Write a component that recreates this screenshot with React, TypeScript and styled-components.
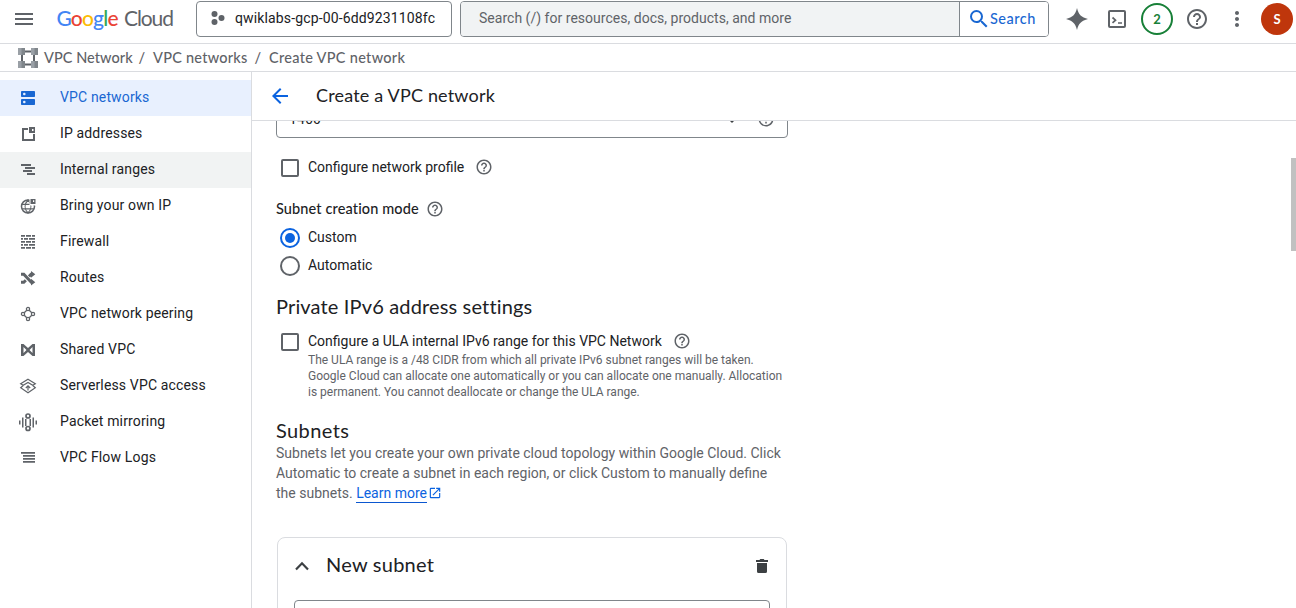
import React from "react";
import styled, { createGlobalStyle, css } from "styled-components";
import {
  MdArrowBack,
  MdHelpOutline,
  MdMenu,
  MdMoreVert,
  MdOpenInNew,
  MdSearch,
} from "react-icons/md";

const display = `"Google Sans", Lato, "Open Sans", sans-serif`;
const body = `Roboto, "Liberation Sans", sans-serif`;

const GlobalStyle = createGlobalStyle`
  * { box-sizing: border-box; }
  body { margin: 0; background: #fff; font-family: ${body}; font-size: 14px; color: #202124; overflow: hidden; }
  h1, h2, p { margin: 0; font-weight: 400; }
  svg { display: block; flex: none; }
`;

const Page = styled.div`
  display: flex;
  flex-direction: column;
  width: 100%;
  height: 608px;
  overflow: hidden;
`;

const TopBar = styled.header`
  display: flex;
  align-items: center;
  height: 44px;
  padding: 0 3px 6px 12px;
  border-bottom: 1px solid #dadce0;
  color: #5f6368;
`;

const Logo = styled.svg`
  margin-left: 20px;
  font-family: ${display};
`;

const ProjectPicker = styled.button`
  display: flex;
  align-items: center;
  gap: 10px;
  width: 256px;
  height: 36px;
  margin: 1px 0 0 16px;
  padding: 0 0 2px 14px;
  border: 1px solid #80868b;
  border-radius: 4px;
  background: #fff;
  color: #202124;
  font: 14px ${body};
  letter-spacing: 0.14px;
`;

const SearchBox = styled.div`
  display: flex;
  width: 589px;
  height: 36px;
  margin: 1px 0 0 8px;
  border: 1px solid #80868b;
  border-radius: 4px;
  overflow: hidden;
`;

const SearchHint = styled.div`
  flex: 1;
  padding: 8px 18px;
  background: #f1f3f4;
  line-height: 17px;
  letter-spacing: 0.02px;
`;

const SearchButton = styled.button`
  display: flex;
  align-items: center;
  width: 89px;
  padding: 0 0 0 7px;
  border: 0;
  border-left: 1px solid #80868b;
  background: #fff;
  color: #1967d2;
  font: 500 14.5px ${display};
  letter-spacing: 0.5px;
  span { margin-left: -1px; padding-bottom: 2px; }
`;

const Tools = styled.div`
  display: grid;
  grid-template-columns: repeat(5, 40px) 36px;
  align-items: center;
  justify-items: center;
  flex: none;
  margin-left: 8px;
  > :last-child { justify-self: end; }
`;

const Badge = styled.span<{ $filled?: boolean }>`
  display: flex;
  align-items: center;
  justify-content: center;
  width: 32px;
  height: 32px;
  border-radius: 50%;
  font: 700 13px ${display};
  ${(p) =>
    p.$filled
      ? css`background: #bf360c; color: #fff;`
      : css`border: 2px solid #188038; color: #188038;`}
`;

const Breadcrumbs = styled.nav`
  display: flex;
  align-items: center;
  height: 28px;
  padding: 0 18px;
  border-bottom: 1px solid #dadce0;
  color: #5f6368;
  font: 500 14.5px ${display};
  letter-spacing: 0.2px;
`;

const Crumb = styled.span<{ $width: number; $left?: number; $spacing?: number }>`
  width: ${(p) => p.$width}px;
  margin-left: ${(p) => p.$left ?? 0}px;
  letter-spacing: ${(p) => p.$spacing ?? 0.25}px;
  white-space: nowrap;
`;

const Slash = styled.span`
  width: 22px;
  text-align: center;
`;

const Body = styled.div`
  display: flex;
  flex: 1;
  min-height: 0;
`;

const Sidebar = styled.aside`
  width: 252px;
  padding-top: 8px;
  border-right: 1px solid #dadce0;
`;

const NavItem = styled.div<{ $state?: "active" | "hover" }>`
  display: flex;
  align-items: center;
  height: 36px;
  padding-left: 18px;
  gap: 22px;
  background: ${(p) =>
    p.$state === "active" ? "#e8f0fe" : p.$state === "hover" ? "#f1f3f3" : "#fff"};
  color: ${(p) => (p.$state === "active" ? "#1967d2" : "#202124")};
  svg {
    color: ${(p) => (p.$state === "active" ? "#1967d2" : "#5f6368")};
  }
`;

const NavLabel = styled.span`
  padding-bottom: 2px;
  letter-spacing: 0.15px;
`;

const Main = styled.main`
  display: flex;
  flex: 1;
  flex-direction: column;
  min-width: 0;
`;

const TitleBar = styled.div`
  display: flex;
  align-items: center;
  height: 49px;
  padding-left: 16px;
  gap: 24px;
  border-bottom: 1px solid #dadce0;
  svg { color: #0b63e0; }
`;

const Title = styled.h1`
  padding-bottom: 2px;
  font: 400 18px ${display};
  letter-spacing: 0.18px;
`;

const Scroller = styled.div`
  display: flex;
  justify-content: space-between;
  flex: 1;
  min-height: 0;
  overflow: hidden;
`;

const Form = styled.div`
  width: 512px;
  margin-left: 24px;
  margin-top: -23px;
`;

const ScrollThumb = styled.div`
  width: 5px;
  height: 93px;
  margin-top: 37px;
  background: #c1c1c1;
`;

const MtuField = styled.div`
  display: flex;
  align-items: center;
  height: 40px;
  padding: 2px 12px 0;
  border: 1px solid #80868b;
  border-radius: 4px;
`;

const MtuValue = styled.span`
  flex: 1;
  letter-spacing: 0.1px;
`;

const Caret = styled.span`
  margin: 3px 20px 0 0;
  border: 5px solid transparent;
  border-top-color: #3c4043;
  border-bottom: 0;
`;

const Row = styled.div<{ $top: number }>`
  display: flex;
  align-items: center;
  height: 20px;
  margin-top: ${(p) => p.$top}px;
  gap: 8px;
`;

const Help = styled(MdHelpOutline)<{ $left?: number }>`
  margin-left: ${(p) => p.$left ?? 0}px;
  color: #5f6368;
`;

const Checkbox = styled.span`
  width: 18px;
  height: 18px;
  margin: 2px 1px 0 5px;
  border: 2px solid #5f6368;
  border-radius: 2px;
`;

const Radio = styled.span<{ $on?: boolean }>`
  display: flex;
  align-items: center;
  justify-content: center;
  width: 20px;
  height: 20px;
  margin: 2px 0 0 4px;
  border: 2px solid ${(p) => (p.$on ? "#0b63e0" : "#5f6368")};
  border-radius: 50%;
  &::after {
    content: "";
    width: 10px;
    height: 10px;
    border-radius: 50%;
    background: ${(p) => (p.$on ? "#0b63e0" : "transparent")};
  }
`;

const Strong = styled.span`
  width: 144px;
  padding-bottom: 2px;
  font: 500 14.5px ${display};
  letter-spacing: 0.12px;
  white-space: nowrap;
`;

const Heading = styled.h2<{ $top?: number; $spacing?: number }>`
  margin-top: ${(p) => p.$top ?? 0}px;
  padding-bottom: 2px;
  font: 400 20px/22px ${display};
  letter-spacing: ${(p) => p.$spacing ?? 0.15}px;
`;

const Hint = styled.p`
  margin: 1px 0 0 32px;
  color: #5f6368;
  font-size: 12px;
  line-height: 16px;
  white-space: nowrap;
`;

const Paragraph = styled.p`
  color: #5f6368;
  line-height: 20px;
  white-space: nowrap;
`;

const Link = styled.a`
  padding-bottom: 1px;
  border-bottom: 1px solid #0b57d0;
  color: #0b63e0;
`;

const External = styled(MdOpenInNew)`
  display: inline-block;
  margin-left: 1px;
  color: #0b63e0;
  vertical-align: -2px;
`;

const Card = styled.section`
  width: 510px;
  height: 120px;
  margin: 34px 0 0 1px;
  padding: 0 16px;
  border: 1px solid #dadce0;
  border-radius: 8px;
`;

const CardHead = styled.div`
  display: flex;
  align-items: center;
  height: 56px;
  padding-right: 2px;
  color: #3c4043;
  h2 {
    flex: 1;
    margin: 0 0 2px 16px;
    color: #202124;
  }
`;

const NameField = styled.div`
  height: 40px;
  margin-top: 6px;
  border: 1px solid #80868b;
  border-radius: 4px;
`;

const Glyph = ({ children }: { children: React.ReactNode }) => (
  <svg width="20" height="20" viewBox="0 0 20 20" fill="currentColor">
    {children}
  </svg>
);

const line = { fill: "none", stroke: "currentColor" };

const icons = {
  networks: (
    <>
      <rect x="3" y="3" width="14" height="6" rx="0.8" />
      <rect x="3" y="11" width="14" height="6" rx="0.8" />
      <circle cx="6.300" cy="6" r="1.300" fill="#e8f0fe" />
      <circle cx="6.300" cy="14" r="1.300" fill="#e8f0fe" />
    </>
  ),
  addresses: (
    <>
      <path {...line} strokeWidth="2" d="M10 5H5v11h11v-6" />
      <path d="M11 3h6v6h-6z" />
      <path fill="#fff" d="M14 5h1.500v2H14z" />
    </>
  ),
  ranges: <path d="M3 4h10v2H3zM7 7h10v2H7zM5 10h9v2H5zM9 13h8v2H9z" />,
  byoip: (
    <>
      <circle {...line} strokeWidth="1.500" cx="10" cy="10.500" r="6.500" />
      <path {...line} strokeWidth="1.200" d="M10 4c-3.800 4-3.800 9 0 13 3.800-4 3.800-9 0-13zM4 8.300h12M4 12.800h12" />
      <path fill="#fff" d="M11.500 2H19v7.500h-7.500z" />
      <path d="M12.500 3h5v5h-5z" />
      <path fill="#fff" d="M15 4.300h1.200v1.700H15z" />
    </>
  ),
  firewall: (
    <path d="M3 3h4v1.700H3zM8 3h5v1.700H8zM14 3h3v1.700h-3zM3 6h2v1.700H3zM6 6h4v1.700H6zM11 6h6v1.700h-6zM3 9h4v1.700H3zM8 9h5v1.700H8zM14 9h3v1.700h-3zM3 12h2v1.700H3zM6 12h4v1.700H6zM11 12h6v1.700h-6zM3 15h4v1.700H3zM8 15h5v1.700H8zM14 15h3v1.700h-3z" />
  ),
  routes: (
    <>
      <path {...line} strokeWidth="3" d="M3 6.300h2.800l7.500 8H14M3 14.300h2.800l2-2M11 8.500l2-2.200H14" />
      <path d="M13 3 17.300 6.300 13 9.800zM13 10.800l4.300 3.500L13 17.600z" />
    </>
  ),
  peering: (
    <g {...line} strokeWidth="1.300">
      <circle cx="10" cy="5" r="1.600" />
      <circle cx="10" cy="15" r="1.600" />
      <circle cx="5" cy="10" r="1.600" />
      <circle cx="15" cy="10" r="1.600" />
      <path d="m6.200 8.800 2.600-2.600M11.200 6.200l2.600 2.600M13.800 11.200l-2.600 2.600M8.800 13.800l-2.600-2.600" />
    </g>
  ),
  shared: (
    <path fillRule="evenodd" d="M3 4h2.500L10 8l4.500-4H17v12h-2.500L10 12l-4.500 4H3zM5.500 7v6L8.500 10zM14.500 7v6l-3-3z" />
  ),
  serverless: (
    <g {...line} strokeWidth="1.200">
      <path d="M10 3.300 17.300 7.700l-2.500 1.500L10 6.500 5.200 9.200 2.700 7.700zM5.200 9.500 2.700 11.800 10 16.700l7.300-4.900-2.500-2.300M10 14.500V10M7.800 12 10 9.800l2.200 2.200" />
    </g>
  ),
  mirroring: (
    <>
      <path d="M1 8.500h1.500v4H1zM4 5.500h1.500v10H4zM14.500 5.500H16v10h-1.500zM17.500 8.500H19v4h-1.500zM7 7h1.500v7H7zM11.500 7H13v7h-1.500z" />
      <circle {...line} strokeWidth="1.700" cx="10" cy="4" r="2" />
      <circle {...line} strokeWidth="1.700" cx="10" cy="16.500" r="2" />
    </>
  ),
  logs: <path d="M3 4h14v1.800H3zM5 7h12v1.800H5zM5 10h12v1.800H5zM5 13h12v1.800H5z" />,
};

const nav: { label: string; icon: keyof typeof icons; state?: "active" | "hover" }[] = [
  { label: "VPC networks", icon: "networks", state: "active" },
  { label: "IP addresses", icon: "addresses" },
  { label: "Internal ranges", icon: "ranges", state: "hover" },
  { label: "Bring your own IP", icon: "byoip" },
  { label: "Firewall", icon: "firewall" },
  { label: "Routes", icon: "routes" },
  { label: "VPC network peering", icon: "peering" },
  { label: "Shared VPC", icon: "shared" },
  { label: "Serverless VPC access", icon: "serverless" },
  { label: "Packet mirroring", icon: "mirroring" },
  { label: "VPC Flow Logs", icon: "logs" },
];

export default function App() {
  return (
    <Page>
      <GlobalStyle />
      <TopBar>
        <MdMenu size={24} />
        <Logo width="124" height="30" viewBox="0 0 124 30">
          <text y="21.500" fontSize="21" fontWeight="500" textLength="62" x="0.500">
            <tspan fill="#4285f4">G</tspan>
            <tspan fill="#ea4335">o</tspan>
            <tspan fill="#fbbc04">o</tspan>
            <tspan fill="#4285f4">g</tspan>
            <tspan fill="#34a853">l</tspan>
            <tspan fill="#ea4335">e</tspan>
          </text>
          <text x="68" y="21.500" fontSize="21" fill="#5f6368" textLength="50">Cloud</text>
        </Logo>
        <ProjectPicker>
          <svg width="14" height="14" viewBox="0 0 14 14" fill="#5f6368">
            <circle cx="3.500" cy="3" r="3" />
            <circle cx="10.500" cy="7" r="3" />
            <circle cx="3.500" cy="11" r="3" />
          </svg>
          qwiklabs-gcp-00-6dd9231108fc
        </ProjectPicker>
        <SearchBox>
          <SearchHint>Search (/) for resources, docs, products, and more</SearchHint>
          <SearchButton>
            <MdSearch size={24} />
            <span>Search</span>
          </SearchButton>
        </SearchBox>
        <Tools>
          <svg width="24" height="24" viewBox="0 0 24 24" fill="#5f6368">
            <path d="M12 1c1.500 6.500 4.500 9.500 11 11-6.500 1.500-9.500 4.500-11 11-1.500-6.500-4.500-9.500-11-11 6.500-1.500 9.500-4.500 11-11z" />
          </svg>
          <svg width="20" height="20" viewBox="0 0 20 20" fill="none" stroke="#5f6368" strokeWidth="2">
            <rect x="2" y="2" width="16" height="16" rx="1" />
            <path d="m5.500 8.500 3 2.700-3 2.700M11 14h4" strokeWidth="1.700" />
          </svg>
          <Badge>2</Badge>
          <MdHelpOutline size={24} />
          <MdMoreVert size={24} />
          <Badge $filled>S</Badge>
        </Tools>
      </TopBar>
      <Breadcrumbs>
        <svg width="20" height="20" viewBox="0 0 20 20">
          <path fill="none" stroke="#5f6368" strokeWidth="2" d="M4 3.500h12v13H4z" />
          <path fill="#9aa0a6" d="M0 0h7v7H0zM13 0h7v7h-7zM0 13h7v7H0zM13 13h7v7h-7z" />
          <path fill="#80868b" d="M3.500 0H7v7H3.500zM16.500 0H20v7h-3.500zM3.500 13H7v7H3.500zM16.500 13H20v7h-3.500z" />
        </svg>
        <Crumb $width={87} $left={6} $spacing={0.05}>VPC Network</Crumb>
        <Slash>/</Slash>
        <Crumb $width={94}>VPC networks</Crumb>
        <Slash>/</Slash>
        <Crumb $width={136} $spacing={0.3}>Create VPC network</Crumb>
      </Breadcrumbs>
      <Body>
        <Sidebar>
          {nav.map((n) => (
            <NavItem key={n.label} $state={n.state}>
              <Glyph>{icons[n.icon]}</Glyph>
              <NavLabel>{n.label}</NavLabel>
            </NavItem>
          ))}
        </Sidebar>
        <Main>
          <TitleBar>
            <MdArrowBack size={24} />
            <Title>Create a VPC network</Title>
          </TitleBar>
          <Scroller>
            <Form>
              <MtuField>
                <MtuValue>1460</MtuValue>
                <Caret />
                <Help size={18} />
              </MtuField>
              <Row $top={19}>
                <Checkbox />
                Configure network profile
                <Help size={18} $left={3} />
              </Row>
              <Row $top={22}>
                <Strong>Subnet creation mode</Strong>
                <Help size={18} $left={-2} />
              </Row>
              <Row $top={8}>
                <Radio $on />
                Custom
              </Row>
              <Row $top={8}>
                <Radio />
                Automatic
              </Row>
              <Heading $top={20}>Private IPv6 address settings</Heading>
              <Row $top={12}>
                <Checkbox />
                Configure a ULA internal IPv6 range for this VPC Network
                <Help size={18} $left={3} />
              </Row>
              <Hint>
                The ULA range is a /48 CIDR from which all private IPv6 subnet ranges will be taken.
                <br />
                Google Cloud can allocate one automatically or you can allocate one manually. Allocation
                <br />
                is permanent. You cannot deallocate or change the ULA range.
              </Hint>
              <Heading $top={19} $spacing={0.4}>Subnets</Heading>
              <Paragraph>
                Subnets let you create your own private cloud topology within Google Cloud. Click
                <br />
                Automatic to create a subnet in each region, or click Custom to manually define
                <br />
                the subnets. <Link>Learn more</Link>
                <External size={14} />
              </Paragraph>
              <Card>
                <CardHead>
                  <svg width="16" height="16" viewBox="0 0 16 16" fill="none" stroke="currentColor" strokeWidth="2.200">
                    <path d="m2 11.500 6-6.200 6 6.200" />
                  </svg>
                  <Heading $spacing={0.25}>New subnet</Heading>
                  <svg width="12" height="14" viewBox="0 0 12 14" fill="currentColor">
                    <path d="M0 1h3.500l.8-1h3.400l.8 1H12v2H0zM1 4h10v8.500a1.500 1.500 0 0 1-1.500 1.500h-7A1.500 1.500 0 0 1 1 12.500z" />
                  </svg>
                </CardHead>
                <NameField />
              </Card>
            </Form>
            <ScrollThumb />
          </Scroller>
        </Main>
      </Body>
    </Page>
  );
}
